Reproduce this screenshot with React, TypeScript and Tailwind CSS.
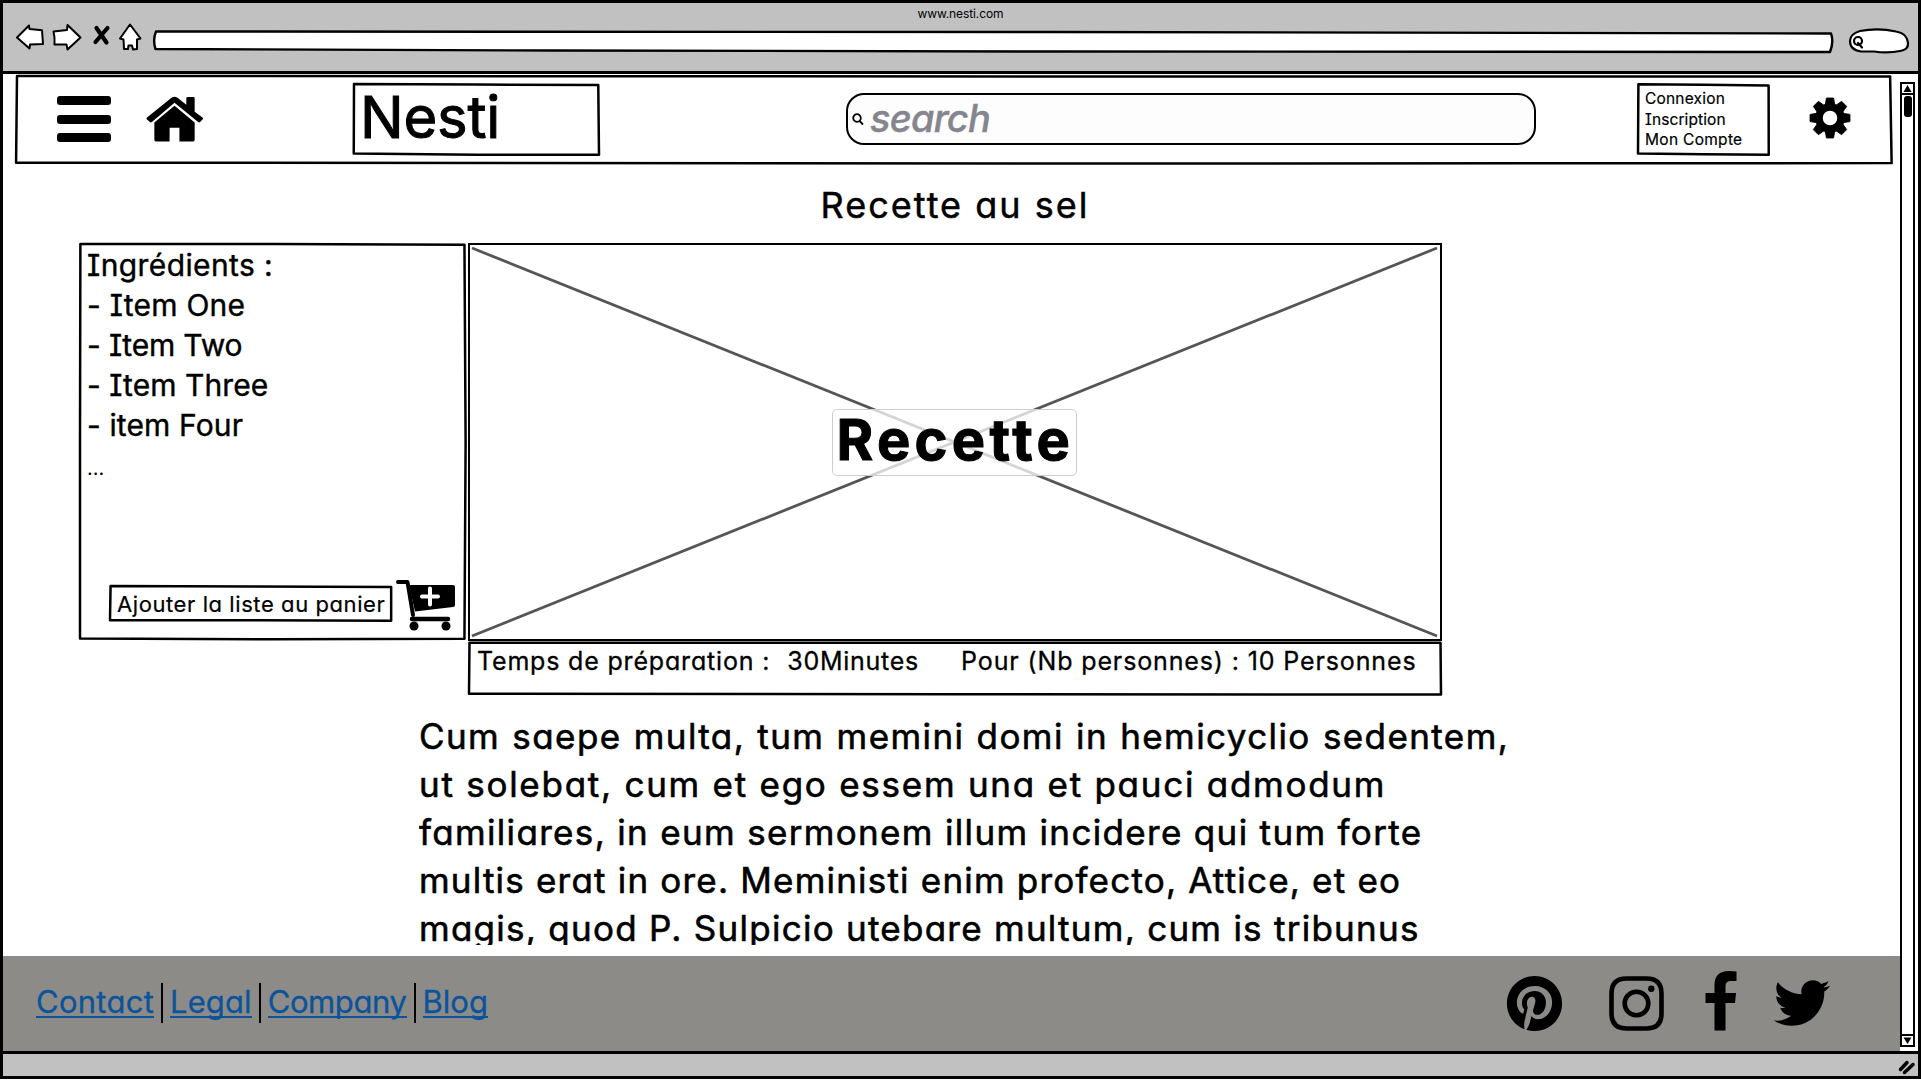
import type { ReactNode } from "react";
import { FaPinterest, FaTwitter } from "react-icons/fa";

const ingredients = [
  { label: "Ingrédients :", cls: "tracking-[0.4px]" },
  { label: "- Item One", cls: "tracking-[0.25px]" },
  { label: "- Item Two", cls: "tracking-[-0.18px]" },
  { label: "- Item Three", cls: "tracking-[0.06px]" },
  { label: "- item Four", cls: "tracking-[0.12px]" },
];

const paragraph = [
  { text: "Cum saepe multa, tum memini domi in hemicyclio sedentem,", cls: "tracking-[1.4px] [word-spacing:1px]" },
  { text: "ut solebat, cum et ego essem una et pauci admodum", cls: "tracking-[1.74px]" },
  { text: "familiares, in eum sermonem illum incidere qui tum forte", cls: "tracking-[1.33px]" },
  { text: "multis erat in ore. Meministi enim profecto, Attice, et eo", cls: "tracking-[1.2px]" },
  { text: "magis, quod P. Sulpicio utebare multum, cum is tribunus", cls: "tracking-[1.26px]" },
];

const links = [
  { label: "Contact", cls: "tracking-[0.26px]" },
  { label: "Legal", cls: "tracking-[0.1px]" },
  { label: "Company", cls: "tracking-[-0.4px]" },
  { label: "Blog", cls: "tracking-[0px]" },
];

function T({ cls, children }: { cls: string; children: ReactNode }) {
  return <span className={`inline-block whitespace-pre ${cls}`}>{children}</span>;
}

/* Slightly uneven pen outline drawn along the edge of its parent panel. */
function Sketch({ d }: { d: string }) {
  return (
    <svg
      className="pointer-events-none absolute -inset-px h-[calc(100%+2px)] w-[calc(100%+2px)] overflow-visible"
      viewBox="0 0 100 100"
      preserveAspectRatio="none"
      fill="none"
      stroke="#000"
      strokeWidth="2.500"
      strokeLinejoin="round"
    >
      <path d={d} vectorEffect="non-scaling-stroke" />
    </svg>
  );
}

function BrowserBar() {
  return (
    <header className="h-[71px] shrink-0 border-b-[3px] border-black bg-[#c1c1c1]">
      <div className="h-5 text-center text-[12px] leading-[21px]">
        <T cls="tracking-[-0.1px]">www.nesti.com</T>
      </div>
      <div className="flex items-start pl-[12px]">
        <svg className="h-[28px] w-[128px]" viewBox="0 0 128 28" fill="#fff" stroke="#000" strokeWidth="2" strokeLinejoin="round">
          <path d="M2 14.500L14 2.500L14.500 6L27 7.200L28 21L15 21.500L14.500 25.500Z" />
          <path d="M38.500 8.500L52 7L52.500 2L65.500 14.500L52.500 26.500L51.500 21.500L39.500 21.500Q40 14 38.500 8.500Z" />
          <path d="M81.500 5L91.500 19.500M92.500 5L80.500 19" strokeWidth="4.200" strokeLinecap="round" fill="none" />
          <path d="M115 1.500L125.500 15.500L122 16.500L122 26L118 26.500L117 22.500L113.500 22.500L113 26L109 26L108.500 16.500L105 15.500Z" />
        </svg>
        <svg className="mt-[6px] ml-[9px] h-[26px] w-[1683px]" viewBox="0 0 1683 26" fill="#fff" stroke="#000" strokeWidth="2.400" strokeLinejoin="round">
          <path d="M4 2.500L900 3L1679 4.500Q1682 13 1678 23L900 22.500L400 21.500L3.500 20Q0.500 11 4 2.500Z" />
        </svg>
        <svg className="mt-[5px] ml-[13px] h-[27px] w-[62px]" viewBox="0 0 62 27" fill="#fff" stroke="#000" strokeWidth="2.200" strokeLinejoin="round">
          <path d="M12 3Q30 -0.500 48 3.500Q59 5 60 15Q60.500 22 52 23Q40 25.500 26 23.500L13 23.500Q2 22 2 13Q2 6 12 3Z" />
          <circle cx="10" cy="13" r="4" />
          <path d="M10 15L14 19.500" strokeLinecap="round" />
        </svg>
      </div>
    </header>
  );
}

function HouseIcon() {
  return (
    <svg className="mt-[19px] ml-[35px] h-[47px] w-[58px]" viewBox="0 0 59 47">
      <path d="M1 21.500L26 1.500Q29 -0.800 32 1.500L41 8.500V2Q41 0.500 42.500 0.500H48.500Q49.500 0.500 49.500 2V15.500L57.500 21.500Q58.500 22.500 57.500 23.500L55 26Q54 27 53 26L29 6.500L6 26Q5 27 4 26L1 23.500Q0 22.500 1 21.500Z" />
      <path d="M29 9.500L49.500 26.500V44Q49.500 46 47.500 46H34V32H24V46H10.500Q8.500 46 8.500 44V26.500Z" />
    </svg>
  );
}

function GearIcon() {
  return (
    <svg className="mt-[20px] ml-[39px] h-[42px] w-[42px]" viewBox="-21 -21 42 42">
      {[0, 45, 90, 135, 180, 225, 270, 315].map((a) => (
        <path key={a} d="M-4.800 -13L-3.600 -20H3.600L4.800 -13Z" transform={`rotate(${a})`} stroke="#000" strokeWidth="0.800" strokeLinejoin="round" />
      ))}
      <circle r="11" fill="none" stroke="#000" strokeWidth="7.500" />
    </svg>
  );
}

function Navbar() {
  return (
    <nav className="relative mt-px ml-[13px] flex h-[90px] w-[1877px] shrink-0 items-start border-2 border-transparent">
      <Sketch d="M0 0L60 0.500L99.900 0.500L99.980 99L60 99.500L-0.050 98.500Z" />
      <div className="mt-[19px] ml-[39px] flex w-[54px] flex-col gap-[9.500px]">
        <div className="h-[9px] rounded-[3px] bg-black" />
        <div className="h-[9px] rounded-[3px] bg-black" />
        <div className="h-[9px] rounded-[3px] bg-black" />
      </div>
      <HouseIcon />
      <div className="relative mt-[6px] ml-[149px] h-[73px] w-[247px] border-2 border-transparent pl-[5px] text-[58px] leading-[64px] [-webkit-text-stroke:1px_#000]">
        <Sketch d="M0 0L50 0.800L99.700 1.500L100 99.500L50 99.500L-0.100 98Z" />
        <T cls="tracking-[-0.2px]">Nesti</T>
      </div>
      <div className="mt-[16px] ml-[246px] flex h-[52px] w-[690px] items-center rounded-[18px] border-2 border-black bg-[#fdfdfd] pl-[4px]">
        <svg className="h-[14px] w-[12px]" viewBox="0 0 12 14" fill="none" stroke="#000" strokeWidth="1.800">
          <circle cx="5" cy="6" r="3.800" />
          <path d="M7.500 9L11 12.500" />
        </svg>
        <div className="ml-[6px] pb-[3px] text-[38px] leading-[44px] font-medium text-[#85858f] italic [-webkit-text-stroke:0.4px_#85858f]">
          <T cls="tracking-[-0.8px]">search</T>
        </div>
      </div>
      <div className="relative mt-[6px] ml-[101px] flex h-[73px] w-[133px] flex-col border-2 border-transparent pt-[4px] pl-[6px] text-[15.500px] leading-[20.500px] [-webkit-text-stroke:0.2px_#000]">
        <Sketch d="M0.300 0.200L50 1L99.700 2L99.800 99.500L50 99L0 98Z" />
        <T cls="tracking-[0.2px]">Connexion</T>
        <T cls="tracking-[0.1px]">Inscription</T>
        <T cls="tracking-[0.3px]">Mon Compte</T>
      </div>
      <GearIcon />
    </nav>
  );
}

function IngredientsCard() {
  return (
    <section className="relative flex h-[398px] w-[388px] flex-col border-2 border-transparent pl-[6px]">
      <Sketch d="M0.100 0L50 0L99.600 0.200L99.900 50L99.600 99.700L50 99.800L0 99.600L0 50Z" />
      <div className="text-[30px] leading-[40px] [-webkit-text-stroke:0.4px_#000]">
        {ingredients.map((i) => (
          <div key={i.label} className="h-10">
            <T cls={i.cls}>{i.label}</T>
          </div>
        ))}
      </div>
      <div className="pt-[2px] text-[20px] leading-[42px]">...</div>
      <div className="mt-auto mb-[8px] ml-[22px] flex items-end">
        <button className="relative mb-[9px] h-[37px] w-[284px] border-2 border-transparent pl-[6px] text-left text-[22px] leading-[30px] [-webkit-text-stroke:0.2px_#000]">
          <Sketch d="M0.200 0.200L50 1.500L99.700 2.500L99.700 99L50 98L0 98Z" />
          <T cls="tracking-[0.58px]">Ajouter la liste au panier</T>
        </button>
        <svg className="ml-[2px] h-[52px] w-[62px]" viewBox="0 0 62 52">
          <path d="M3 3H12.500L18 36" fill="none" stroke="#000" strokeWidth="4" strokeLinecap="round" strokeLinejoin="round" />
          <path d="M14 6H58Q60 6 60 8V26Q60 28 58 28L20 32.500Z" />
          <path d="M35 9.500V25.500M27 17.500H43" stroke="#fff" strokeWidth="4" strokeLinecap="round" />
          <path d="M17 40H53" stroke="#000" strokeWidth="4.500" strokeLinecap="round" />
          <circle cx="19" cy="47" r="4.500" />
          <circle cx="51" cy="47" r="4.500" />
        </svg>
      </div>
    </section>
  );
}

function RecipeImage() {
  return (
    <div className="relative flex h-[398px] items-center justify-center border-2 border-black">
      <svg className="absolute inset-0 h-full w-full" viewBox="0 0 970 394" preserveAspectRatio="none" stroke="#555" strokeWidth="2.800">
        <path d="M2 3L967 391M2 391L967 3" />
      </svg>
      <div className="relative mr-[2px] h-[67px] w-[245px] rounded-[5px] border border-[#ccc] bg-white/75 pl-[4px] text-[56px] leading-[60px] font-bold [-webkit-text-stroke:1px_#000]">
        <T cls="tracking-[4.3px]">Recette</T>
      </div>
    </div>
  );
}

function Footer() {
  return (
    <footer className="mt-[11px] flex h-[95px] shrink-0 items-start justify-between bg-[#8d8b88]">
      <div className="mt-[27px] ml-[33px] flex text-[31px] leading-[37px] text-[#0b539b] [-webkit-text-stroke:0.3px_#0b539b]">
        {links.map((l, i) => (
          <div key={l.label} className="flex">
            {i > 0 && <div className="mr-[7px] ml-[7px] h-[40px] w-[2px] bg-black" />}
            <a className="h-[35px] border-b-2 border-[#0b539b]">
              <T cls={l.cls}>{l.label}</T>
            </a>
          </div>
        ))}
      </div>
      <div className="mt-[15px] mr-[70px] flex items-start">
        <FaPinterest className="mt-[4px] size-[57px]" />
        <svg className="mt-[4px] ml-[45px] size-[57px]" viewBox="-28.500 -28.500 57 57" fill="none" stroke="#000" strokeWidth="4.600">
          <path d="M-10 -25H10Q25 -25 25 -10V10Q25 25 10 25H-10Q-25 25 -25 10V-10Q-25 -25 -10 -25Z" />
          <circle r="11.800" />
          <circle cx="14.800" cy="-14.800" r="3.200" fill="#000" stroke="none" />
        </svg>
        <svg className="ml-[40px] h-[60px] w-[32px]" viewBox="0 0 32 60">
          <path d="M31.500 0.500V10H26Q20.500 10 20.500 15V22H31L30 32H20.500V59.500H9.500V32H0.500V22H9.500V14Q9.500 0 24 0Q28 0 31.500 0.500Z" />
        </svg>
        <FaTwitter className="mt-[4px] ml-[37px] size-[56px]" />
      </div>
    </footer>
  );
}

function Scrollbar() {
  return (
    <div className="mt-[8px] mb-[4px] flex w-[15px] flex-col items-center border-2 border-black">
      <svg className="h-[9px] w-full" viewBox="0 0 11 9">
        <path d="M5.500 1L9.500 8H1.500Z" />
      </svg>
      <div className="h-[2px] w-full bg-black" />
      <div className="mt-px h-[21px] w-[8px] rounded-[3px] bg-black" />
      <div className="flex-1" />
      <div className="h-[2px] w-full bg-black" />
      <svg className="h-[9px] w-full" viewBox="0 0 11 9">
        <path d="M5.500 8L9.500 1.500H1.500Z" />
      </svg>
    </div>
  );
}

export default function App() {
  return (
    <div className="flex h-[1079px] w-[1921px] flex-col overflow-hidden border-[3px] border-black bg-white font-['Inter',sans-serif] text-black [font-feature-settings:'cv11','cv08','calt'_0]">
      <BrowserBar />
      <main className="flex h-[977px] shrink-0">
        <div className="flex w-[1897px] flex-col">
          <Navbar />
          <h1 className="mt-[16px] h-[62px] w-[1904px] text-center text-[36px] leading-[48px] [-webkit-text-stroke:0.5px_#000]">
            <T cls="tracking-[2px]">Recette au sel</T>
          </h1>
          <div className="ml-[76px] flex items-start gap-px">
            <IngredientsCard />
            <div className="w-[974px]">
              <RecipeImage />
              <div className="relative flex h-[55px] border-2 border-transparent pt-px pl-[7px] text-[25px] leading-[34px] [-webkit-text-stroke:0.3px_#000]">
                <Sketch d="M0.050 1.500L50 1.500L99.950 1.500L100 99L50 98.500L0 97.500Z" />
                <T cls="tracking-[0.82px]">Temps de préparation :</T>
                <div className="ml-[17px]">
                  <T cls="tracking-[0.75px]">30Minutes</T>
                </div>
                <div className="ml-[42px]">
                  <T cls="tracking-[0.87px]">Pour (Nb personnes) : 10 Personnes</T>
                </div>
              </div>
            </div>
          </div>
          <div className="mt-[16px] ml-[416px] h-[233px] overflow-hidden text-[35px] leading-[48px] [-webkit-text-stroke:0.6px_#000]">
            {paragraph.map((p) => (
              <div key={p.text} className="h-12">
                <T cls={p.cls}>{p.text}</T>
              </div>
            ))}
          </div>
          <Footer />
        </div>
        <Scrollbar />
      </main>
      <div className="flex flex-1 items-start justify-end border-t-[3px] border-black bg-[#c1c1c1]">
        <svg className="mt-[6px] mr-[2px] h-[15px] w-[18px]" viewBox="0 0 18 15" stroke="#000" strokeWidth="3.500" strokeLinecap="round">
          <path d="M2.500 9.500L9 2.500M6.500 12.500L15 4.500" />
        </svg>
      </div>
    </div>
  );
}
